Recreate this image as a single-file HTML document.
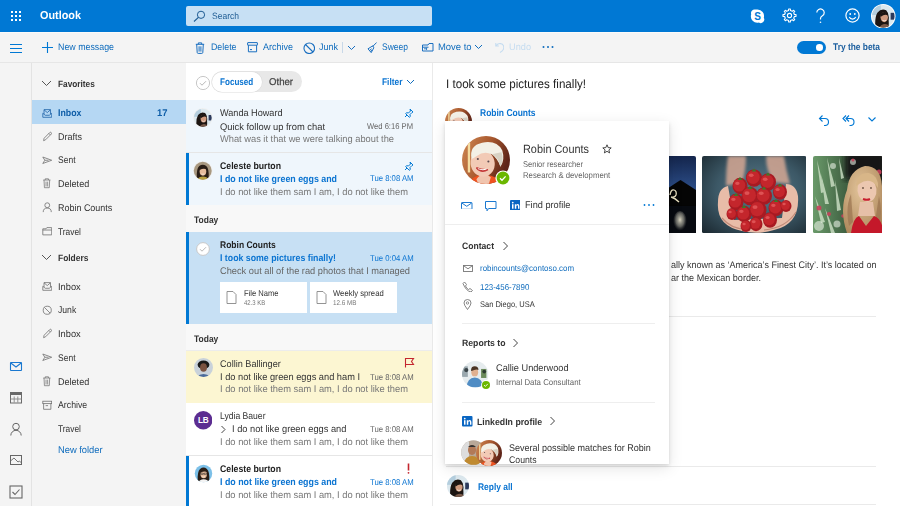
<!DOCTYPE html>
<html><head><meta charset="utf-8"><style>
html,body{margin:0;padding:0;width:900px;height:506px;overflow:hidden;background:#fff;}
body{position:relative;font-family:"Liberation Sans",sans-serif;}
body>div,body>svg,body>span{position:absolute;}
.t{white-space:nowrap;line-height:1;transform-origin:0 0;text-rendering:geometricPrecision;}
</style></head><body>
<div style="left:0px;top:31px;width:900px;height:31px;background:#f4f4f4;"></div>
<div style="left:0px;top:31.5px;width:900px;height:1.5px;background:#fafafa;"></div>
<div style="left:0px;top:0px;width:900px;height:31.5px;background:#0078d4;"></div>
<div style="left:0px;top:62px;width:900px;height:1px;background:#e6e6e6;"></div>
<div style="left:0px;top:63px;width:31px;height:443px;background:#f4f4f4;"></div>
<div style="left:31px;top:63px;width:1px;height:443px;background:#e3e3e3;"></div>
<div style="left:32px;top:63px;width:154px;height:443px;background:#f4f4f4;"></div>
<div style="left:186px;top:63px;width:246px;height:443px;background:#ffffff;"></div>
<div style="left:432px;top:63px;width:468px;height:443px;background:#ffffff;"></div>
<div style="left:432px;top:63px;width:1px;height:443px;background:#eaeaea;"></div>
<svg style="left:0px;top:0px;" width="31" height="31" viewBox="0 0 31 31"><rect x="11" y="11" width="2" height="2" fill="#fff"/><rect x="11" y="15" width="2" height="2" fill="#fff"/><rect x="11" y="19" width="2" height="2" fill="#fff"/><rect x="15" y="11" width="2" height="2" fill="#fff"/><rect x="15" y="15" width="2" height="2" fill="#fff"/><rect x="15" y="19" width="2" height="2" fill="#fff"/><rect x="19" y="11" width="2" height="2" fill="#fff"/><rect x="19" y="15" width="2" height="2" fill="#fff"/><rect x="19" y="19" width="2" height="2" fill="#fff"/></svg>
<span class="t" style="left:39.50px;top:11.18px;font-size:11.54px;font-weight:700;color:#ffffff;transform:scaleX(0.9412);">Outlook</span>
<div style="left:186px;top:5.5px;width:246px;height:20.8px;background:#c7e0f4;border-radius:2px;"></div>
<svg style="left:193px;top:10px;" width="13" height="12" viewBox="0 0 13 12"><circle cx="8" cy="4.8" r="3.6" fill="none" stroke="#1c5a92" stroke-width="1"/><line x1="5.4" y1="7.4" x2="1" y2="11.5" stroke="#1c5a92" stroke-width="1.1"/></svg>
<span class="t" style="left:212.00px;top:12.24px;font-size:9.27px;font-weight:400;color:#1c5a92;transform:scaleX(0.9196);">Search</span>
<svg style="left:749px;top:8px;" width="17" height="16" viewBox="0 0 17 16"><path d="M8.5 1.5a6.5 6.5 0 0 1 6.3 8.2a3.6 3.6 0 0 1-4.9 4.9A6.5 6.5 0 0 1 2.2 6.3A3.6 3.6 0 0 1 6.3 1.6A6.5 6.5 0 0 1 8.5 1.5z" fill="#fff"/><text x="8.5" y="12" font-family="Liberation Sans" font-weight="700" font-size="10" fill="#0078d4" text-anchor="middle">S</text></svg>
<svg style="left:782px;top:8.3px;" width="15" height="15" viewBox="0 0 15 15"><circle cx="7.5" cy="7.5" r="2.1" fill="none" stroke="#fff" stroke-width="1.1"/><path d="M12.40 6.51 L14.04 6.64 L14.04 8.36 L12.40 8.49 L11.67 10.26 L12.73 11.52 L11.52 12.73 L10.26 11.67 L8.49 12.40 L8.36 14.04 L6.64 14.04 L6.51 12.40 L4.74 11.67 L3.48 12.73 L2.27 11.52 L3.33 10.26 L2.60 8.49 L0.96 8.36 L0.96 6.64 L2.60 6.51 L3.33 4.74 L2.27 3.48 L3.48 2.27 L4.74 3.33 L6.51 2.60 L6.64 0.96 L8.36 0.96 L8.49 2.60 L10.26 3.33 L11.52 2.27 L12.73 3.48 L11.67 4.74z" fill="none" stroke="#fff" stroke-width="1.1" stroke-linejoin="round"/></svg>
<svg style="left:814px;top:8px;" width="13" height="16" viewBox="0 0 13 16"><path d="M2.8 4.6a3.7 3.7 0 1 1 5.6 3.2c-1.2.7-1.9 1.4-1.9 2.8v1" fill="none" stroke="#fff" stroke-width="1.2"/><circle cx="6.5" cy="14.3" r=".8" fill="#fff"/></svg>
<svg style="left:845px;top:8px;" width="15" height="15" viewBox="0 0 15 15"><circle cx="7.5" cy="7.5" r="6.6" fill="none" stroke="#fff" stroke-width="1.2"/><circle cx="5.2" cy="6" r=".9" fill="#fff"/><circle cx="9.8" cy="6" r=".9" fill="#fff"/><path d="M4.3 9a3.5 3.5 0 0 0 6.4 0" fill="none" stroke="#fff" stroke-width="1.1"/></svg>
<svg style="left:871px;top:3.5px;" width="24.5" height="24.5" viewBox="0 0 100 100"><defs><clipPath id="ca1"><circle cx="50" cy="50" r="46"/></clipPath></defs><circle cx="50" cy="50" r="50" fill="#fff"/><g clip-path="url(#ca1)"><rect width="100" height="100" fill="#dce8ee"/><rect x="0" y="0" width="40" height="45" fill="#b4cede"/><rect x="80" y="36" width="20" height="28" fill="#2c3a5c"/><path d="M18 100 Q14 56 26 36 Q42 16 62 26 Q76 40 72 66 Q74 86 70 100z" fill="#1c1512"/><ellipse cx="54" cy="54" rx="15" ry="20" fill="#cf9a7e"/><path d="M38 46 Q44 28 64 34 Q70 40 70 48 Q58 38 40 52z" fill="#1c1512"/><path d="M46 66 Q54 72 62 66" fill="none" stroke="#f6ece6" stroke-width="3.5"/><path d="M30 100 Q42 82 56 82 Q72 82 82 100z" fill="#7a5a4a"/></g></svg>
<svg style="left:9px;top:42px;" width="14" height="12" viewBox="0 0 14 12"><path d="M1 2.5h12M1 6.5h12M1 10.5h12" stroke="#0078d4" stroke-width="1.1"/></svg>
<svg style="left:41px;top:41px;" width="13" height="13" viewBox="0 0 13 13"><path d="M6.5 1v11M1 6.5h11" stroke="#0078d4" stroke-width="1.1"/></svg>
<span class="t" style="left:58.20px;top:43.40px;font-size:9.58px;font-weight:400;color:#0f6cbd;transform:scaleX(0.9228);">New message</span>
<svg style="left:194.5px;top:41.5px;" width="10" height="12" viewBox="0 0 10 12"><path d="M0.8 2.3h8.4M3.3 2.3V0.9h3.4v1.4M1.7 2.3l.5 8.2q.1 .9 1 .9h3.6q.9 0 1-.9l.5-8.2M4.1 4.3v5.3M5.9 4.3v5.3" fill="none" stroke="#1a6fc0" stroke-width="1"/></svg>
<span class="t" style="left:210.60px;top:43.40px;font-size:9.58px;font-weight:400;color:#0f6cbd;transform:scaleX(0.9210);">Delete</span>
<svg style="left:246.8px;top:42px;" width="11" height="11" viewBox="0 0 11 11"><rect x="0.6" y="0.6" width="9.8" height="2.6" rx="0.3" fill="none" stroke="#1a6fc0" stroke-width="1"/><path d="M1.4 3.2v6.6h8.2V3.2M3 7.6h2" fill="none" stroke="#1a6fc0" stroke-width="1"/></svg>
<span class="t" style="left:262.80px;top:43.40px;font-size:9.58px;font-weight:400;color:#0f6cbd;transform:scaleX(0.9389);">Archive</span>
<svg style="left:302.5px;top:41.5px;" width="12.5" height="12.5" viewBox="0 0 12.5 12.5"><circle cx="6.25" cy="6.25" r="5.3" fill="none" stroke="#1a6fc0" stroke-width="1.1"/><path d="M2.5 2.5l7.5 7.5" stroke="#1a6fc0" stroke-width="1.1"/></svg>
<span class="t" style="left:319.00px;top:43.40px;font-size:9.58px;font-weight:400;color:#0f6cbd;transform:scaleX(0.9390);">Junk</span>
<div style="left:342px;top:42px;width:0.8px;height:11px;background:#c8d8e8;"></div>
<svg style="left:347px;top:45px;" width="9" height="5.5" viewBox="0 0 9 5.5"><path d="M1 1l3.5 3.5L8 1" fill="none" stroke="#1a6fc0" stroke-width="1"/></svg>
<svg style="left:367px;top:42px;" width="10" height="11" viewBox="0 0 10 11"><path d="M9.6 0.5L5.6 4.6M5.8 3.8L1 6.8l3.2 3.8 2.6-4.8z M2.6 8.4l2-1.6M3.6 9.6l1.6-1.6" fill="none" stroke="#1a6fc0" stroke-width="1" stroke-linejoin="round"/></svg>
<span class="t" style="left:381.60px;top:43.40px;font-size:9.58px;font-weight:400;color:#0f6cbd;transform:scaleX(0.8875);">Sweep</span>
<svg style="left:422px;top:43px;" width="11.5" height="8.5" viewBox="0 0 11.5 8.5"><path d="M0.5 2h5.5l1-1.5h4v7.5H0.5z M0.5 4.2h6" fill="none" stroke="#1a6fc0" stroke-width="1"/><path d="M2 5.8h3M4 4.8l1.1 1-1.1 1" fill="none" stroke="#1a6fc0" stroke-width="0.9"/></svg>
<span class="t" style="left:438.20px;top:43.40px;font-size:9.58px;font-weight:400;color:#0f6cbd;transform:scaleX(0.9860);">Move to</span>
<svg style="left:474px;top:44px;" width="9" height="6" viewBox="0 0 9 6"><path d="M1 1l3.5 3.5L8 1" fill="none" stroke="#0f6cbd" stroke-width="1"/></svg>
<svg style="left:494.5px;top:42px;" width="9.5" height="11" viewBox="0 0 9.5 11"><path d="M0.8 1v3h3M1 3.8Q3 1.3 5.5 1.6q3.3 .5 3.3 3.9q0 3-3.8 5" fill="none" stroke="#c5dcf0" stroke-width="1.1"/></svg>
<span class="t" style="left:509.30px;top:43.40px;font-size:9.58px;font-weight:400;color:#c5dcf0;transform:scaleX(0.9604);">Undo</span>
<svg style="left:542px;top:45px;" width="12" height="4" viewBox="0 0 12 4"><circle cx="1.5" cy="2" r="1" fill="#0f6cbd"/><circle cx="6" cy="2" r="1" fill="#0f6cbd"/><circle cx="10.5" cy="2" r="1" fill="#0f6cbd"/></svg>
<div style="left:797px;top:41px;width:29px;height:13px;background:#0078d4;border-radius:7px;"></div>
<div style="left:816.3px;top:44px;width:6.6px;height:6.6px;background:#fff;border-radius:50%;"></div>
<span class="t" style="left:833.30px;top:43.45px;font-size:9.68px;font-weight:700;color:#1b5e9e;transform:scaleX(0.8656);">Try the beta</span>
<svg style="left:9px;top:361px;" width="14" height="11" viewBox="0 0 14 11"><rect x="1.5" y="1.5" width="11" height="8" rx="0.5" fill="none" stroke="#1a78d0" stroke-width="1.1"/><path d="M1.8 2l5.2 4 5.2-4" fill="none" stroke="#1a78d0" stroke-width="1.1"/></svg>
<svg style="left:9px;top:391px;" width="14" height="13" viewBox="0 0 14 13"><rect x="1.5" y="1.5" width="11" height="10.5" fill="none" stroke="#6a6a6a" stroke-width="1"/><rect x="1.5" y="1.5" width="11" height="2.5" fill="#6a6a6a"/><path d="M5.2 5.5v6M8.8 5.5v6M1.5 8h11" fill="none" stroke="#888" stroke-width="0.9"/></svg>
<svg style="left:9px;top:422px;" width="14" height="14" viewBox="0 0 14 14"><circle cx="7" cy="4.6" r="3.3" fill="none" stroke="#666" stroke-width="1"/><path d="M1.8 13.5a5.2 5.2 0 0 1 10.4 0" fill="none" stroke="#666" stroke-width="1"/></svg>
<svg style="left:9px;top:454px;" width="14" height="12" viewBox="0 0 14 12"><rect x="1.5" y="1.5" width="11" height="9" fill="none" stroke="#666" stroke-width="1"/><path d="M1.5 7l3.5-3 4 4 1.5-1 2 2" fill="none" stroke="#666" stroke-width="0.9"/></svg>
<svg style="left:9px;top:485px;" width="14" height="14" viewBox="0 0 14 14"><rect x="1" y="1" width="12" height="12" fill="none" stroke="#666" stroke-width="1.1"/><path d="M3.5 7l2.5 2.5 4.5-5" fill="none" stroke="#666" stroke-width="1.1"/></svg>
<svg style="left:41px;top:80px;" width="11" height="7" viewBox="0 0 11 7"><path d="M1 1l4.5 4.5L10 1" fill="none" stroke="#555" stroke-width="1"/></svg>
<span class="t" style="left:57.60px;top:80.44px;font-size:9.27px;font-weight:700;color:#333333;transform:scaleX(0.8931);">Favorites</span>
<div style="left:32px;top:100px;width:154px;height:23.5px;background:#b5d7f3;"></div>
<svg style="left:41.5px;top:107.5px;" width="10.5" height="10.5" viewBox="0 0 13 13"><path d="M2.5 7.5V2h8v5.5M2.5 2.2l4 3.5 4-3.5" fill="none" stroke="#1f63a8" stroke-width="1"/><path d="M1 6.5v5h11v-5L9 9H4z" fill="none" stroke="#1f63a8" stroke-width="1" stroke-linejoin="round"/></svg>
<span class="t" style="left:57.60px;top:108.75px;font-size:9.68px;font-weight:700;color:#0f5ea8;transform:scaleX(0.9071);">Inbox</span>
<span class="t" style="left:156.50px;top:108.75px;font-size:9.68px;font-weight:700;color:#0f5ea8;transform:scaleX(0.9753);">17</span>
<svg style="left:41.5px;top:131.1px;" width="10.5" height="10.5" viewBox="0 0 13 13"><path d="M2 12l.6-3L9.5 2a1.3 1.3 0 0 1 1.9 1.9L4.5 10.8z M8.5 3l2 2" fill="none" stroke="#707070" stroke-width="1"/></svg>
<span class="t" style="left:57.60px;top:132.85px;font-size:9.68px;font-weight:400;color:#333333;transform:scaleX(0.9303);">Drafts</span>
<svg style="left:41.5px;top:154.7px;" width="10.5" height="10.5" viewBox="0 0 13 13"><path d="M1 2.5l11 4-11 4 2.5-4z M3.5 6.5H8" fill="none" stroke="#707070" stroke-width="1"/></svg>
<span class="t" style="left:57.60px;top:156.45px;font-size:9.68px;font-weight:400;color:#333333;transform:scaleX(0.8791);">Sent</span>
<svg style="left:41.5px;top:178.4px;" width="10.5" height="10.5" viewBox="0 0 13 13"><path d="M1.5 2.5h9M4 2.5V1h4v1.5M2.5 2.5l.5 9.5h6l.5-9.5M5 4.5v6M7 4.5v6" fill="none" stroke="#707070" stroke-width="0.9"/></svg>
<span class="t" style="left:57.60px;top:180.15px;font-size:9.68px;font-weight:400;color:#333333;transform:scaleX(0.9357);">Deleted</span>
<svg style="left:41.5px;top:202.3px;" width="10.5" height="10.5" viewBox="0 0 13 13"><circle cx="6.5" cy="4" r="3" fill="none" stroke="#707070" stroke-width="1"/><path d="M1.5 12.5a5 5 0 0 1 10 0" fill="none" stroke="#707070" stroke-width="1"/></svg>
<span class="t" style="left:57.60px;top:204.05px;font-size:9.68px;font-weight:400;color:#333333;transform:scaleX(0.9265);">Robin Counts</span>
<svg style="left:41.5px;top:225.9px;" width="10.5" height="10.5" viewBox="0 0 13 13"><path d="M1 3.5h4l1-1.5h6v9H1z M1 5h11" fill="none" stroke="#707070" stroke-width="1"/></svg>
<span class="t" style="left:57.60px;top:227.65px;font-size:9.68px;font-weight:400;color:#333333;transform:scaleX(0.8636);">Travel</span>
<svg style="left:41px;top:254px;" width="11" height="7" viewBox="0 0 11 7"><path d="M1 1l4.5 4.5L10 1" fill="none" stroke="#555" stroke-width="1"/></svg>
<span class="t" style="left:57.60px;top:254.24px;font-size:9.27px;font-weight:700;color:#333333;transform:scaleX(0.9083);">Folders</span>
<svg style="left:41.5px;top:281.3px;" width="10.5" height="10.5" viewBox="0 0 13 13"><path d="M2.5 7.5V2h8v5.5M2.5 2.2l4 3.5 4-3.5" fill="none" stroke="#707070" stroke-width="1"/><path d="M1 6.5v5h11v-5L9 9H4z" fill="none" stroke="#707070" stroke-width="1" stroke-linejoin="round"/></svg>
<span class="t" style="left:57.60px;top:283.05px;font-size:9.68px;font-weight:400;color:#333333;transform:scaleX(0.9589);">Inbox</span>
<svg style="left:41.5px;top:304.7px;" width="10.5" height="10.5" viewBox="0 0 13 13"><circle cx="6.5" cy="6.5" r="5" fill="none" stroke="#707070" stroke-width="1"/><path d="M3 3l7 7" stroke="#707070" stroke-width="1"/></svg>
<span class="t" style="left:57.60px;top:306.45px;font-size:9.68px;font-weight:400;color:#333333;transform:scaleX(0.8905);">Junk</span>
<svg style="left:41.5px;top:328.4px;" width="10.5" height="10.5" viewBox="0 0 13 13"><path d="M2 12l.6-3L9.5 2a1.3 1.3 0 0 1 1.9 1.9L4.5 10.8z M8.5 3l2 2" fill="none" stroke="#707070" stroke-width="1"/></svg>
<span class="t" style="left:57.60px;top:330.15px;font-size:9.68px;font-weight:400;color:#333333;transform:scaleX(0.9589);">Inbox</span>
<svg style="left:41.5px;top:352.3px;" width="10.5" height="10.5" viewBox="0 0 13 13"><path d="M1 2.5l11 4-11 4 2.5-4z M3.5 6.5H8" fill="none" stroke="#707070" stroke-width="1"/></svg>
<span class="t" style="left:57.60px;top:354.05px;font-size:9.68px;font-weight:400;color:#333333;transform:scaleX(0.8791);">Sent</span>
<svg style="left:41.5px;top:376.4px;" width="10.5" height="10.5" viewBox="0 0 13 13"><path d="M1.5 2.5h9M4 2.5V1h4v1.5M2.5 2.5l.5 9.5h6l.5-9.5M5 4.5v6M7 4.5v6" fill="none" stroke="#707070" stroke-width="0.9"/></svg>
<span class="t" style="left:57.60px;top:378.15px;font-size:9.68px;font-weight:400;color:#333333;transform:scaleX(0.9357);">Deleted</span>
<svg style="left:41.5px;top:399.7px;" width="10.5" height="10.5" viewBox="0 0 13 13"><rect x="1" y="1.5" width="11" height="3" fill="none" stroke="#707070" stroke-width="1"/><path d="M2 4.5v7h9v-7M4.5 7h3" fill="none" stroke="#707070" stroke-width="1"/></svg>
<span class="t" style="left:57.60px;top:401.45px;font-size:9.68px;font-weight:400;color:#333333;transform:scaleX(0.9050);">Archive</span>
<span class="t" style="left:57.60px;top:425.15px;font-size:9.68px;font-weight:400;color:#333333;transform:scaleX(0.8636);">Travel</span>
<span class="t" style="left:57.60px;top:446.45px;font-size:9.68px;font-weight:400;color:#0f6cbd;transform:scaleX(0.9647);">New folder</span>
<svg style="left:195px;top:75px;" width="16" height="16" viewBox="0 0 16 16"><circle cx="8" cy="8" r="6.6" fill="#fff" stroke="#c8c8c8" stroke-width="1"/><path d="M5 8.2l2 2 4-4" fill="none" stroke="#b8b8b8" stroke-width="1"/></svg>
<div style="left:212px;top:71.3px;width:90px;height:21px;background:#e8e8e8;border-radius:10.5px;"></div>
<div style="left:212.4px;top:71.6px;width:49.6px;height:20.4px;background:#ffffff;border-radius:10.2px;box-shadow:0 0 0 0.6px #dcdcdc;"></div>
<span class="t" style="left:220.40px;top:77.95px;font-size:9.68px;font-weight:700;color:#0b74d1;transform:scaleX(0.8371);">Focused</span>
<span class="t" style="left:268.90px;top:77.85px;font-size:9.89px;font-weight:400;color:#444444;transform:scaleX(0.9715);-webkit-text-stroke:0.25px #444;">Other</span>
<span class="t" style="left:381.50px;top:77.95px;font-size:9.68px;font-weight:700;color:#0b74d1;transform:scaleX(0.8666);">Filter</span>
<svg style="left:406px;top:79px;" width="9" height="6" viewBox="0 0 9 6"><path d="M1 1l3.5 3.5L8 1" fill="none" stroke="#0f6cbd" stroke-width="1"/></svg>
<div style="left:186px;top:99.5px;width:246px;height:0.6px;background:#eaeaea;"></div>
<div style="left:186px;top:100px;width:246px;height:52px;background:#eff6fc;"></div>
<div style="left:186px;top:152px;width:246px;height:0.7px;background:#e6e6e6;"></div>
<svg style="left:193px;top:107.5px;" width="19.5" height="19.5" viewBox="0 0 100 100"><defs><clipPath id="av1"><circle cx="50" cy="50" r="46"/></clipPath></defs><circle cx="50" cy="50" r="50" fill="#f0f0f0"/><g clip-path="url(#av1)"><rect width="100" height="100" fill="#dce8ee"/><rect x="0" y="0" width="40" height="45" fill="#b4cede"/><rect x="80" y="36" width="20" height="28" fill="#2c3a5c"/><path d="M18 100 Q14 56 26 36 Q42 16 62 26 Q76 40 72 66 Q74 86 70 100z" fill="#1c1512"/><ellipse cx="54" cy="54" rx="15" ry="20" fill="#cf9a7e"/><path d="M38 46 Q44 28 64 34 Q70 40 70 48 Q58 38 40 52z" fill="#1c1512"/><path d="M46 66 Q54 72 62 66" fill="none" stroke="#f6ece6" stroke-width="3.5"/><path d="M30 100 Q42 82 56 82 Q72 82 82 100z" fill="#7a5a4a"/></g></svg>
<span class="t" style="left:220.00px;top:108.95px;font-size:9.68px;font-weight:400;color:#333;transform:scaleX(0.9425);">Wanda Howard</span>
<svg style="left:404px;top:108px;" width="10" height="10" viewBox="0 0 10 10"><path d="M6 1l3 3-1 .5-2 2 .3 2-1 .8L1.7 5.7l.8-1 2 .3 2-2z M3 7L1 9" fill="none" stroke="#0078d4" stroke-width="1"/></svg>
<span class="t" style="left:220.00px;top:122.65px;font-size:9.68px;font-weight:400;color:#333;transform:scaleX(0.9669);">Quick follow up from chat</span>
<span class="t" style="left:367.00px;top:122.33px;font-size:8.45px;font-weight:400;color:#666;transform:scaleX(0.9025);">Wed 6:16 PM</span>
<span class="t" style="left:220.00px;top:135.45px;font-size:9.68px;font-weight:400;color:#777;transform:scaleX(0.9603);">What was it that we were talking about the</span>
<div style="left:186px;top:152.7px;width:246px;height:52.3px;background:#eff6fc;"></div>
<div style="left:186px;top:152.7px;width:3px;height:52.3px;background:#0078d4;"></div>
<svg style="left:193px;top:160.5px;" width="19.5" height="19.5" viewBox="0 0 100 100"><defs><clipPath id="av2"><circle cx="50" cy="50" r="46"/></clipPath></defs><circle cx="50" cy="50" r="50" fill="#f0f0f0"/><g clip-path="url(#av2)"><rect width="100" height="100" fill="#a89880"/><path d="M20 90 Q16 40 32 26 Q50 12 68 26 Q84 40 80 90z" fill="#2a1e16"/><ellipse cx="51" cy="54" rx="17" ry="21" fill="#e6bc9c"/><path d="M32 42 Q40 22 58 26 Q70 30 70 44 Q56 34 34 46z" fill="#2a1e16"/><path d="M44 66 Q51 71 58 66" fill="none" stroke="#fff" stroke-width="3"/><path d="M18 100 Q30 80 51 80 Q72 80 84 100z" fill="#b8a040"/></g></svg>
<span class="t" style="left:220.00px;top:161.55px;font-size:9.68px;font-weight:700;color:#222;transform:scaleX(0.9008);">Celeste burton</span>
<svg style="left:404px;top:161px;" width="10" height="10" viewBox="0 0 10 10"><path d="M6 1l3 3-1 .5-2 2 .3 2-1 .8L1.7 5.7l.8-1 2 .3 2-2z M3 7L1 9" fill="none" stroke="#0078d4" stroke-width="1"/></svg>
<span class="t" style="left:220.00px;top:174.55px;font-size:9.68px;font-weight:700;color:#0b74d1;transform:scaleX(0.9147);">I do not like green eggs and</span>
<span class="t" style="left:369.80px;top:174.43px;font-size:8.45px;font-weight:400;color:#0b74d1;transform:scaleX(0.9152);">Tue 8:08 AM</span>
<span class="t" style="left:220.00px;top:187.95px;font-size:9.68px;font-weight:400;color:#777;transform:scaleX(0.9634);">I do not like them sam I am, I do not like them</span>
<div style="left:186px;top:205px;width:246px;height:27px;background:#f8f8f8;"></div>
<span class="t" style="left:194.30px;top:216.25px;font-size:9.48px;font-weight:700;color:#333;transform:scaleX(0.8938);">Today</span>
<div style="left:186px;top:232px;width:246px;height:91.5px;background:#c7e0f4;"></div>
<div style="left:186px;top:232px;width:3px;height:91.5px;background:#0078d4;"></div>
<svg style="left:195px;top:241px;" width="16" height="16" viewBox="0 0 16 16"><circle cx="8" cy="8" r="6.4" fill="#fff" stroke="#c8c8c8" stroke-width="1"/><path d="M5 8.2l2 2 4-4" fill="none" stroke="#b8b8b8" stroke-width="1"/></svg>
<span class="t" style="left:220.40px;top:240.85px;font-size:9.68px;font-weight:700;color:#222;transform:scaleX(0.8785);">Robin Counts</span>
<span class="t" style="left:220.00px;top:254.05px;font-size:9.68px;font-weight:700;color:#0b74d1;transform:scaleX(0.9068);">I took some pictures finally!</span>
<span class="t" style="left:369.70px;top:253.93px;font-size:8.45px;font-weight:400;color:#0b74d1;transform:scaleX(0.9173);">Tue 0:04 AM</span>
<span class="t" style="left:220.00px;top:267.05px;font-size:9.68px;font-weight:400;color:#666;transform:scaleX(0.9576);">Check out all of the rad photos that I managed</span>
<div style="left:220px;top:282px;width:87px;height:31px;background:#ffffff;"></div>
<svg style="left:226px;top:291px;" width="11" height="13" viewBox="0 0 11 13"><path d="M1 .5h6l3 3v9H1z" fill="none" stroke="#888" stroke-width="0.9"/></svg>
<span class="t" style="left:243.80px;top:289.13px;font-size:8.45px;font-weight:400;color:#333;transform:scaleX(0.8998);">File Name</span>
<span class="t" style="left:243.80px;top:300.31px;font-size:7.00px;font-weight:400;color:#777;transform:scaleX(0.8547);">42.3 KB</span>
<div style="left:309.5px;top:282px;width:87px;height:31px;background:#ffffff;"></div>
<svg style="left:315.5px;top:291px;" width="11" height="13" viewBox="0 0 11 13"><path d="M1 .5h6l3 3v9H1z" fill="none" stroke="#888" stroke-width="0.9"/></svg>
<span class="t" style="left:333.30px;top:289.13px;font-size:8.45px;font-weight:400;color:#333;transform:scaleX(0.9109);">Weekly spread</span>
<span class="t" style="left:333.30px;top:300.31px;font-size:7.00px;font-weight:400;color:#777;transform:scaleX(0.8973);">12.6 MB</span>
<div style="left:186px;top:323.5px;width:246px;height:26.5px;background:#f8f8f8;"></div>
<span class="t" style="left:194.30px;top:334.55px;font-size:9.48px;font-weight:700;color:#333;transform:scaleX(0.8938);">Today</span>
<div style="left:186px;top:349.5px;width:246px;height:1px;background:#ececec;"></div>
<div style="left:186px;top:350.5px;width:246px;height:52px;background:#fcf6d2;"></div>
<svg style="left:193.5px;top:358.3px;" width="19" height="19" viewBox="0 0 19 19"><defs><clipPath id="av3"><circle cx="9.5" cy="9.5" r="9.5"/></clipPath></defs><g clip-path="url(#av3)"><rect width="19" height="19" fill="#c9d2da"/><ellipse cx="9.5" cy="6.6499999999999995" rx="5.89" ry="4.275" fill="#1a1a1a"/><ellipse cx="9.5" cy="9.5" rx="3.42" ry="4.37" fill="#7a5240"/><path d="M2.375 19 Q9.5 12.825000000000001 16.625 19z" fill="#4a6a9a"/></g></svg>
<span class="t" style="left:220.00px;top:359.55px;font-size:9.68px;font-weight:400;color:#333;transform:scaleX(0.9424);">Collin Ballinger</span>
<svg style="left:404px;top:357px;" width="11" height="11" viewBox="0 0 11 11"><path d="M1.5 10.5V1M1.5 1.5h8l-2 3 2 3h-8" fill="none" stroke="#c4262e" stroke-width="1.1"/></svg>
<span class="t" style="left:220.00px;top:372.65px;font-size:9.68px;font-weight:400;color:#333;transform:scaleX(0.9573);">I do not like green eggs and ham I</span>
<span class="t" style="left:370.00px;top:372.53px;font-size:8.45px;font-weight:400;color:#666;transform:scaleX(0.9173);">Tue 8:08 AM</span>
<span class="t" style="left:220.00px;top:385.15px;font-size:9.68px;font-weight:400;color:#777;transform:scaleX(0.9634);">I do not like them sam I am, I do not like them</span>
<div style="left:186px;top:402.5px;width:246px;height:53px;background:#ffffff;"></div>
<div style="left:186px;top:455.3px;width:246px;height:0.7px;background:#e6e6e6;"></div>
<svg style="left:193.8px;top:411px;" width="18.5" height="18.5" viewBox="0 0 18.5 18.5"><circle cx="9.25" cy="9.25" r="9.25" fill="#5c2d91"/><text x="9.25" y="12.4" font-family="Liberation Sans" font-size="8.2" font-weight="700" fill="#fff" text-anchor="middle" letter-spacing="-0.3">LB</text></svg>
<span class="t" style="left:220.20px;top:412.35px;font-size:9.68px;font-weight:400;color:#333;transform:scaleX(0.8875);">Lydia Bauer</span>
<svg style="left:219.5px;top:425px;" width="7" height="9" viewBox="0 0 7 9"><path d="M1.5 1l3.5 3.5L1.5 8" fill="none" stroke="#444" stroke-width="1"/></svg>
<span class="t" style="left:232.00px;top:425.45px;font-size:9.68px;font-weight:400;color:#333;transform:scaleX(0.9583);">I do not like green eggs and</span>
<span class="t" style="left:370.00px;top:425.33px;font-size:8.45px;font-weight:400;color:#666;transform:scaleX(0.9173);">Tue 8:08 AM</span>
<span class="t" style="left:220.00px;top:438.45px;font-size:9.68px;font-weight:400;color:#777;transform:scaleX(0.9634);">I do not like them sam I am, I do not like them</span>
<div style="left:186px;top:456px;width:246px;height:50px;background:#ffffff;"></div>
<div style="left:186px;top:456px;width:3px;height:50px;background:#0078d4;"></div>
<svg style="left:193.5px;top:463.5px;" width="19" height="19" viewBox="0 0 100 100"><defs><clipPath id="av4"><circle cx="50" cy="50" r="46"/></clipPath></defs><circle cx="50" cy="50" r="50" fill="#fff"/><g clip-path="url(#av4)"><rect width="100" height="100" fill="#7cc0e8"/><path d="M20 90 Q16 40 32 26 Q50 12 68 26 Q84 40 80 90z" fill="#2a1e16"/><ellipse cx="51" cy="54" rx="17" ry="21" fill="#e6bc9c"/><path d="M32 42 Q40 22 58 26 Q70 30 70 44 Q56 34 34 46z" fill="#2a1e16"/><path d="M36 48 h12 v7 h-12z M54 48 h12 v7 h-12z M48 51 h6" fill="none" stroke="#222" stroke-width="2.5"/><path d="M44 66 Q51 71 58 66" fill="none" stroke="#fff" stroke-width="3"/><path d="M18 100 Q30 80 51 80 Q72 80 84 100z" fill="#f4f4f4"/></g></svg>
<span class="t" style="left:220.00px;top:464.85px;font-size:9.68px;font-weight:700;color:#222;transform:scaleX(0.9008);">Celeste burton</span>
<svg style="left:406px;top:463px;" width="5" height="11" viewBox="0 0 5 11"><path d="M2.5 0.5v7" stroke="#c4262e" stroke-width="1.6"/><circle cx="2.5" cy="9.8" r="0.9" fill="#c4262e"/></svg>
<span class="t" style="left:220.00px;top:478.25px;font-size:9.68px;font-weight:700;color:#0b74d1;transform:scaleX(0.9147);">I do not like green eggs and</span>
<span class="t" style="left:370.00px;top:478.13px;font-size:8.45px;font-weight:400;color:#0b74d1;transform:scaleX(0.9173);">Tue 8:08 AM</span>
<span class="t" style="left:220.00px;top:491.15px;font-size:9.68px;font-weight:400;color:#777;transform:scaleX(0.9634);">I do not like them sam I am, I do not like them</span>
<span class="t" style="left:446.40px;top:78.19px;font-size:12.36px;font-weight:400;color:#222;transform:scaleX(0.9392);">I took some pictures finally!</span>
<svg style="left:445px;top:107.6px;" width="27" height="27" viewBox="0 0 100 100"><defs><clipPath id="rav1"><circle cx="50" cy="50" r="50"/></clipPath><linearGradient id="rav1g" x1="0" y1="0" x2="1" y2="0.4"><stop offset="0" stop-color="#d08a56"/><stop offset="0.55" stop-color="#a8582e"/><stop offset="1" stop-color="#5e2418"/></linearGradient></defs><g clip-path="url(#rav1)"><rect width="100" height="100" fill="url(#rav1g)"/><rect x="12" y="14" width="5" height="62" fill="#f4dca0"/><path d="M14 100 Q22 80 46 82 Q70 80 86 100z" fill="#ee5220"/><path d="M30 90 Q44 72 60 86 L56 100 L34 100z" fill="#f0c4ae"/><ellipse cx="43" cy="57" rx="25" ry="28" transform="rotate(-15 43 57)" fill="#f2cab6"/><path d="M20 48 Q14 20 42 14 Q72 8 84 30 Q90 50 80 64 Q74 46 62 38 Q46 30 30 42 Q24 46 20 48z" fill="#f3f0e6"/><path d="M62 38 Q76 44 80 64 Q88 48 82 34z" fill="#d8d2c4"/><path d="M30 66 Q40 78 54 70 Q42 72 30 66z" fill="#c43a3a" stroke="#c43a3a" stroke-width="3"/><path d="M33 68 Q42 72 51 69" fill="none" stroke="#fff" stroke-width="2.2"/><circle cx="33" cy="48" r="2.2" fill="#5a4a50"/><circle cx="55" cy="53" r="2.2" fill="#5a4a50"/></g></svg>
<span class="t" style="left:480.00px;top:109.15px;font-size:9.89px;font-weight:700;color:#0b74d1;transform:scaleX(0.8589);">Robin Counts</span>
<svg style="left:818px;top:114px;" width="13" height="12" viewBox="0 0 13 12"><path d="M4.5 1.5L1.5 4.5l3 3M1.8 4.5h5.2a3.5 3.5 0 0 1 0 7H6" fill="none" stroke="#0078d4" stroke-width="1.1"/></svg>
<svg style="left:842px;top:114px;" width="14" height="12" viewBox="0 0 14 12"><path d="M4 1.5L1 4.5l3 3M7 1.5L4 4.5l3 3M4.3 4.5h4.2a3.5 3.5 0 0 1 0 7H7.5" fill="none" stroke="#0078d4" stroke-width="1.1"/></svg>
<svg style="left:867px;top:116px;" width="10" height="7" viewBox="0 0 10 7"><path d="M1.5 1.5l3.5 3.5 3.5-3.5" fill="none" stroke="#0078d4" stroke-width="1.1"/></svg>
<svg style="left:590px;top:155.5px;" width="106" height="77.3" viewBox="0 0 106 77.3"><defs><linearGradient id="sky" x1="0" y1="0" x2="0" y2="1"><stop offset="0" stop-color="#14254c"/><stop offset="0.45" stop-color="#2d4f8a"/><stop offset="0.6" stop-color="#3a5f98"/></linearGradient><radialGradient id="refl" cx="0.5" cy="0.4" r="0.5"><stop offset="0" stop-color="#d8d4c0"/><stop offset="0.6" stop-color="#9a9a90" stop-opacity="0.6"/><stop offset="1" stop-color="#555" stop-opacity="0"/></radialGradient></defs><rect width="106" height="77.3" rx="2" fill="url(#sky)"/><path d="M60 44 L90.5 24 L106 34 L106 52 L60 52z" fill="#050505"/><rect x="0" y="50" width="106" height="27.3" fill="#070a10"/><ellipse cx="90" cy="66" rx="7" ry="11" fill="url(#refl)"/><path d="M80 39 q1 -6 4 -5 q3 1 2 5 q-1 3 -5 2 q4 1 8 5" fill="none" stroke="#e8e0c0" stroke-width="1.3"/></svg>
<svg style="left:702px;top:155.5px;" width="104.4" height="77.3" viewBox="0 0 104.4 77.3"><defs><radialGradient id="sbg" cx="0.55" cy="0.45" r="0.75"><stop offset="0" stop-color="#5a7c8c"/><stop offset="0.55" stop-color="#3c5866"/><stop offset="1" stop-color="#1c2a32"/></radialGradient><filter id="sb"><feGaussianBlur stdDeviation="1.5"/></filter></defs><rect width="104.4" height="77.3" rx="2" fill="url(#sbg)"/><path d="M26 0 L44 0 Q44 16 40 26 L24 30 Q24 12 26 0z M64 0 L82 0 Q84 14 88 28 L72 26 Q64 16 64 0z" fill="#d6a894" opacity="0.85" filter="url(#sb)"/><path d="M16 46 Q14 70 40 75 Q56 79 72 74 Q98 68 96 40 Q94 28 84 28 L80 62 L32 64 L26 30 Q16 32 16 46z" fill="#e8bca8"/><path d="M20 62 Q30 74 46 73 M62 74 Q84 72 94 56" fill="none" stroke="#c08a78" stroke-width="1.2"/><ellipse cx="38" cy="30" rx="7.5" ry="8.25" fill="#a81a22"/><ellipse cx="37.25" cy="29.25" rx="6.0" ry="6.375" fill="#c4262c"/><ellipse cx="35.375" cy="27.375" rx="2.25" ry="1.65" fill="#f07070" opacity="0.6"/><ellipse cx="52" cy="22" rx="8" ry="8.8" fill="#a81a22"/><ellipse cx="51.2" cy="21.2" rx="6.4" ry="6.8" fill="#c4262c"/><ellipse cx="49.2" cy="19.2" rx="2.4" ry="1.76" fill="#f07070" opacity="0.6"/><ellipse cx="66" cy="26" rx="8" ry="8.8" fill="#a81a22"/><ellipse cx="65.2" cy="25.2" rx="6.4" ry="6.8" fill="#c4262c"/><ellipse cx="63.2" cy="23.2" rx="2.4" ry="1.76" fill="#f07070" opacity="0.6"/><ellipse cx="78" cy="36" rx="7" ry="7.700000000000001" fill="#a81a22"/><ellipse cx="77.3" cy="35.3" rx="5.6000000000000005" ry="5.95" fill="#c4262c"/><ellipse cx="75.55" cy="33.55" rx="2.1" ry="1.54" fill="#f07070" opacity="0.6"/><ellipse cx="34" cy="46" rx="7.5" ry="8.25" fill="#a81a22"/><ellipse cx="33.25" cy="45.25" rx="6.0" ry="6.375" fill="#c4262c"/><ellipse cx="31.375" cy="43.375" rx="2.25" ry="1.65" fill="#f07070" opacity="0.6"/><ellipse cx="48" cy="40" rx="8.5" ry="9.350000000000001" fill="#a81a22"/><ellipse cx="47.15" cy="39.15" rx="6.800000000000001" ry="7.225" fill="#c4262c"/><ellipse cx="45.025" cy="37.025" rx="2.55" ry="1.87" fill="#f07070" opacity="0.6"/><ellipse cx="62" cy="40" rx="8" ry="8.8" fill="#a81a22"/><ellipse cx="61.2" cy="39.2" rx="6.4" ry="6.8" fill="#c4262c"/><ellipse cx="59.2" cy="37.2" rx="2.4" ry="1.76" fill="#f07070" opacity="0.6"/><ellipse cx="74" cy="52" rx="7.5" ry="8.25" fill="#a81a22"/><ellipse cx="73.25" cy="51.25" rx="6.0" ry="6.375" fill="#c4262c"/><ellipse cx="71.375" cy="49.375" rx="2.25" ry="1.65" fill="#f07070" opacity="0.6"/><ellipse cx="42" cy="58" rx="7.5" ry="8.25" fill="#a81a22"/><ellipse cx="41.25" cy="57.25" rx="6.0" ry="6.375" fill="#c4262c"/><ellipse cx="39.375" cy="55.375" rx="2.25" ry="1.65" fill="#f07070" opacity="0.6"/><ellipse cx="56" cy="54" rx="8.5" ry="9.350000000000001" fill="#a81a22"/><ellipse cx="55.15" cy="53.15" rx="6.800000000000001" ry="7.225" fill="#c4262c"/><ellipse cx="53.025" cy="51.025" rx="2.55" ry="1.87" fill="#f07070" opacity="0.6"/><ellipse cx="68" cy="64" rx="7" ry="7.700000000000001" fill="#a81a22"/><ellipse cx="67.3" cy="63.3" rx="5.6000000000000005" ry="5.95" fill="#c4262c"/><ellipse cx="65.55" cy="61.55" rx="2.1" ry="1.54" fill="#f07070" opacity="0.6"/><ellipse cx="54" cy="68" rx="6.5" ry="7.15" fill="#a81a22"/><ellipse cx="53.35" cy="67.35" rx="5.2" ry="5.5249999999999995" fill="#c4262c"/><ellipse cx="51.725" cy="65.725" rx="1.95" ry="1.43" fill="#f07070" opacity="0.6"/><ellipse cx="84" cy="50" rx="5.5" ry="6.050000000000001" fill="#a81a22"/><ellipse cx="83.45" cy="49.45" rx="4.4" ry="4.675" fill="#c4262c"/><ellipse cx="82.075" cy="48.075" rx="1.65" ry="1.21" fill="#f07070" opacity="0.6"/><ellipse cx="30" cy="58" rx="5.5" ry="6.050000000000001" fill="#a81a22"/><ellipse cx="29.45" cy="57.45" rx="4.4" ry="4.675" fill="#c4262c"/><ellipse cx="28.075" cy="56.075" rx="1.65" ry="1.21" fill="#f07070" opacity="0.6"/><ellipse cx="44" cy="70" rx="5.5" ry="6.050000000000001" fill="#a81a22"/><ellipse cx="43.45" cy="69.45" rx="4.4" ry="4.675" fill="#c4262c"/><ellipse cx="42.075" cy="68.075" rx="1.65" ry="1.21" fill="#f07070" opacity="0.6"/><path d="M35.5 24.0 l2.5 -3 l2.5 3z" fill="#3d7a2a"/><path d="M49.5 15.5 l2.5 -3 l2.5 3z" fill="#3d7a2a"/><path d="M63.5 19.5 l2.5 -3 l2.5 3z" fill="#3d7a2a"/><path d="M75.5 30.5 l2.5 -3 l2.5 3z" fill="#3d7a2a"/><path d="M31.5 40.0 l2.5 -3 l2.5 3z" fill="#3d7a2a"/><path d="M45.5 33.0 l2.5 -3 l2.5 3z" fill="#3d7a2a"/><path d="M59.5 33.5 l2.5 -3 l2.5 3z" fill="#3d7a2a"/><path d="M71.5 46.0 l2.5 -3 l2.5 3z" fill="#3d7a2a"/><path d="M39.5 52.0 l2.5 -3 l2.5 3z" fill="#3d7a2a"/></svg>
<svg style="left:812.8px;top:155.5px;" width="69.2" height="77.3" viewBox="0 0 69.2 77.3"><defs><linearGradient id="fol" x1="0" y1="0" x2="1" y2="0"><stop offset="0" stop-color="#6a9a6a"/><stop offset="0.5" stop-color="#3e5e40"/><stop offset="1" stop-color="#1e261c"/></linearGradient><radialGradient id="hairg" cx="0.45" cy="0.35" r="0.7"><stop offset="0" stop-color="#e2c49a"/><stop offset="1" stop-color="#b08a5e"/></radialGradient></defs><rect width="69.2" height="77.3" rx="2" fill="url(#fol)"/><filter id="bl"><feGaussianBlur stdDeviation="3"/></filter><rect x="32" y="-4" width="40" height="28" fill="#141812" filter="url(#bl)"/><g fill="#cfe2c8" opacity="0.8"><path d="M4 4 L12 36 L8 37z"/><path d="M14 2 L22 30 L18 31z"/><path d="M2 40 L12 66 L8 67z"/><path d="M22 24 L28 54 L24 55z"/><path d="M8 18 L16 48 L12 48z"/><path d="M26 2 L31 22 L28 23z"/><path d="M12 52 L22 77 L18 77z"/></g><g fill="#e8f0e4" opacity="0.6"><circle cx="6" cy="70" r="5"/><circle cx="24" cy="68" r="3.5"/><circle cx="20" cy="10" r="3"/><circle cx="40" cy="6" r="3"/></g><g fill="#c8405a" opacity="0.9"><circle cx="6" cy="52" r="2.5"/><circle cx="16" cy="58" r="2"/><circle cx="66" cy="16" r="2.5"/><circle cx="30" cy="60" r="1.8"/><circle cx="40" cy="4" r="1.5"/></g><path d="M34 77 Q26 54 34 34 Q36 14 52 10 Q68 10 69 30 L69 77z" fill="url(#hairg)"/><path d="M36 70 Q32 52 38 38 L40 66z M66 72 Q70 56 66 40 L62 66z" fill="#9a7450" opacity="0.7"/><ellipse cx="54" cy="34" rx="9.5" ry="12" transform="rotate(-6 54 34)" fill="#ecc7b0"/><path d="M43 30 Q44 16 56 17 Q66 20 65 32 Q58 20 46 28z" fill="#d8b688"/><path d="M50 43 q4 1.6 7 0" stroke="#c81e2e" stroke-width="2" fill="none"/><circle cx="50" cy="32" r="0.9" fill="#6a5040"/><circle cx="58" cy="32" r="0.9" fill="#6a5040"/><path d="M47 46 L60 46 L62 60 L45 60z" fill="#e6c0a8"/><path d="M38 77 Q40 62 46 60 L53 70 L61 60 Q67 62 69.2 70 L69.2 77z" fill="#c4182a"/></svg>
<span class="t" style="left:671.00px;top:260.50px;font-size:9.58px;font-weight:400;color:#333;transform:scaleX(0.9403);">ally known as ‘America’s Finest City’. It’s located on</span>
<span class="t" style="left:671.00px;top:273.60px;font-size:9.58px;font-weight:400;color:#333;transform:scaleX(0.9443);">ar the Mexican border.</span>
<div style="left:446px;top:315.7px;width:430px;height:0.8px;background:#eaeaea;"></div>
<div style="left:446px;top:465.5px;width:430px;height:0.8px;background:#eaeaea;"></div>
<div style="left:450px;top:504.2px;width:426px;height:0.8px;background:#eaeaea;"></div>
<svg style="left:446px;top:474px;" width="24" height="24" viewBox="0 0 100 100"><defs><clipPath id="av5"><circle cx="50" cy="50" r="46"/></clipPath></defs><circle cx="50" cy="50" r="50" fill="#ffffff"/><g clip-path="url(#av5)"><rect width="100" height="100" fill="#dce8ee"/><rect x="0" y="0" width="40" height="45" fill="#b4cede"/><rect x="80" y="36" width="20" height="28" fill="#2c3a5c"/><path d="M18 100 Q14 56 26 36 Q42 16 62 26 Q76 40 72 66 Q74 86 70 100z" fill="#1c1512"/><ellipse cx="54" cy="54" rx="15" ry="20" fill="#cf9a7e"/><path d="M38 46 Q44 28 64 34 Q70 40 70 48 Q58 38 40 52z" fill="#1c1512"/><path d="M46 66 Q54 72 62 66" fill="none" stroke="#f6ece6" stroke-width="3.5"/><path d="M30 100 Q42 82 56 82 Q72 82 82 100z" fill="#7a5a4a"/></g></svg>
<span class="t" style="left:477.90px;top:483.35px;font-size:9.68px;font-weight:700;color:#0b74d1;transform:scaleX(0.8698);">Reply all</span>
<div style="left:445px;top:121px;width:224px;height:343px;background:#ffffff;box-shadow:0 1.6px 3.6px rgba(0,0,0,0.13),0 4px 14px rgba(0,0,0,0.11);"></div>
<svg style="left:462px;top:136px;" width="48" height="48" viewBox="0 0 100 100"><defs><clipPath id="rav2"><circle cx="50" cy="50" r="50"/></clipPath><linearGradient id="rav2g" x1="0" y1="0" x2="1" y2="0.4"><stop offset="0" stop-color="#d08a56"/><stop offset="0.55" stop-color="#a8582e"/><stop offset="1" stop-color="#5e2418"/></linearGradient></defs><g clip-path="url(#rav2)"><rect width="100" height="100" fill="url(#rav2g)"/><rect x="12" y="14" width="5" height="62" fill="#f4dca0"/><path d="M14 100 Q22 80 46 82 Q70 80 86 100z" fill="#ee5220"/><path d="M30 90 Q44 72 60 86 L56 100 L34 100z" fill="#f0c4ae"/><ellipse cx="43" cy="57" rx="25" ry="28" transform="rotate(-15 43 57)" fill="#f2cab6"/><path d="M20 48 Q14 20 42 14 Q72 8 84 30 Q90 50 80 64 Q74 46 62 38 Q46 30 30 42 Q24 46 20 48z" fill="#f3f0e6"/><path d="M62 38 Q76 44 80 64 Q88 48 82 34z" fill="#d8d2c4"/><path d="M30 66 Q40 78 54 70 Q42 72 30 66z" fill="#c43a3a" stroke="#c43a3a" stroke-width="3"/><path d="M33 68 Q42 72 51 69" fill="none" stroke="#fff" stroke-width="2.2"/><circle cx="33" cy="48" r="2.2" fill="#5a4a50"/><circle cx="55" cy="53" r="2.2" fill="#5a4a50"/></g></svg>
<svg style="left:494.5px;top:169.5px;" width="16" height="16" viewBox="0 0 16 16"><circle cx="8" cy="8" r="7.6" fill="#fff"/><circle cx="8" cy="8" r="6.4" fill="#6bb700"/><path d="M5 8.2l2 2 3.6-3.8" fill="none" stroke="#fff" stroke-width="1.3"/></svg>
<span class="t" style="left:522.70px;top:144.28px;font-size:11.95px;font-weight:400;color:#333;transform:scaleX(0.9123);">Robin Counts</span>
<svg style="left:601.5px;top:143.5px;" width="10" height="10" viewBox="0 0 10 10"><path d="M5 .8l1.2 2.8 3 .3-2.3 2 .7 3L5 7.3 2.4 8.9l.7-3L.8 3.9l3-.3z" fill="none" stroke="#333" stroke-width="0.9"/></svg>
<span class="t" style="left:522.70px;top:159.83px;font-size:8.45px;font-weight:400;color:#666;transform:scaleX(0.8945);">Senior researcher</span>
<span class="t" style="left:522.70px;top:171.03px;font-size:8.45px;font-weight:400;color:#666;transform:scaleX(0.9203);">Research &amp; development</span>
<svg style="left:461.3px;top:201.5px;" width="11.5" height="7.8" viewBox="0 0 11.5 7.8"><rect x=".5" y=".5" width="10.5" height="6.8" rx=".6" fill="none" stroke="#1a78d0" stroke-width="1"/><path d="M.8 1l4.95 3.3L10.7 1" fill="none" stroke="#1a78d0" stroke-width="1"/></svg>
<svg style="left:485px;top:201px;" width="11.5" height="10.5" viewBox="0 0 11.5 10.5"><path d="M.5 .5h10.5v7H3.6L2 9.8V7.5H.5z" fill="none" stroke="#1a78d0" stroke-width="1" stroke-linejoin="round"/></svg>
<svg style="left:509.5px;top:199.5px;" width="10.5" height="10.5" viewBox="0 0 10.5 10.5"><rect width="10.5" height="10.5" rx="1" fill="#0a66c2"/><rect x="2" y="4.2" width="1.5" height="4.5" fill="#fff"/><circle cx="2.75" cy="2.6" r=".9" fill="#fff"/><path d="M4.8 4.2h1.4v.7q.5-.8 1.5-.8q1.7 0 1.7 1.9v2.7H8V6.2q0-.9-.8-.9t-.9 1v2.4H4.8z" fill="#fff"/></svg>
<span class="t" style="left:525.30px;top:201.25px;font-size:9.68px;font-weight:400;color:#333;transform:scaleX(0.9486);">Find profile</span>
<svg style="left:643px;top:203px;" width="12" height="4" viewBox="0 0 12 4"><circle cx="1.5" cy="2" r="0.9" fill="#0078d4"/><circle cx="6" cy="2" r="0.9" fill="#0078d4"/><circle cx="10.5" cy="2" r="0.9" fill="#0078d4"/></svg>
<div style="left:445px;top:224.3px;width:224px;height:0.8px;background:#eeeeee;"></div>
<span class="t" style="left:461.90px;top:241.94px;font-size:9.27px;font-weight:700;color:#333;transform:scaleX(0.9275);">Contact</span>
<svg style="left:501.5px;top:240.5px;" width="7" height="10" viewBox="0 0 7 10"><path d="M1.5 1l4 4-4 4" fill="none" stroke="#444" stroke-width="1"/></svg>
<svg style="left:462.5px;top:264.5px;" width="10" height="7" viewBox="0 0 10 7"><rect x=".5" y=".5" width="9" height="6" fill="none" stroke="#777" stroke-width="0.9"/><path d="M.7 .8l4.3 3 4.3-3" fill="none" stroke="#777" stroke-width="0.9"/></svg>
<span class="t" style="left:480.00px;top:264.48px;font-size:8.55px;font-weight:400;color:#0f6cbd;transform:scaleX(0.9287);">robincounts@contoso.com</span>
<svg style="left:462px;top:281px;" width="11" height="11" viewBox="0 0 11 11"><path d="M2.5 1l2 2.5-1 1.5q1 2.5 3 3.5l1.5-1 2.5 2-1.5 1.5Q4 10 1 2.5z" fill="none" stroke="#777" stroke-width="0.9"/></svg>
<span class="t" style="left:480.00px;top:283.08px;font-size:8.55px;font-weight:400;color:#0f6cbd;transform:scaleX(0.9261);">123-456-7890</span>
<svg style="left:463px;top:299px;" width="9" height="11" viewBox="0 0 9 11"><path d="M4.5 10.5Q1 6 1 4a3.5 3.5 0 0 1 7 0q0 2-3.5 6.5z" fill="none" stroke="#777" stroke-width="0.9"/><circle cx="4.5" cy="4" r="1.2" fill="none" stroke="#777" stroke-width="0.8"/></svg>
<span class="t" style="left:480.00px;top:301.43px;font-size:8.24px;font-weight:400;color:#333;transform:scaleX(0.9121);">San Diego, USA</span>
<div style="left:462px;top:322.8px;width:193px;height:0.8px;background:#eeeeee;"></div>
<span class="t" style="left:462.20px;top:339.14px;font-size:9.27px;font-weight:700;color:#333;transform:scaleX(0.9386);">Reports to</span>
<svg style="left:512px;top:337.7px;" width="7" height="10" viewBox="0 0 7 10"><path d="M1.5 1l4 4-4 4" fill="none" stroke="#444" stroke-width="1"/></svg>
<svg style="left:462px;top:361px;" width="26.5" height="26.5" viewBox="0 0 100 100"><defs><clipPath id="cav"><circle cx="50" cy="50" r="50"/></clipPath></defs><g clip-path="url(#cav)"><rect width="100" height="100" fill="#e6ecee"/><rect x="0" y="20" width="22" height="40" fill="#9aa8ae"/><circle cx="16" cy="34" r="8" fill="#3a4448"/><rect x="72" y="30" width="20" height="34" fill="#6a8a5a"/><circle cx="84" cy="40" r="7" fill="#2c3a30"/><path d="M16 100 Q20 64 48 62 Q76 64 82 100z" fill="#4f8cc4"/><ellipse cx="48" cy="42" rx="13" ry="16" fill="#e0b090"/><path d="M34 36 Q34 20 48 20 Q62 20 62 34 Q54 28 36 38z" fill="#4a3424"/></g></svg>
<svg style="left:480.5px;top:379.5px;" width="10" height="10" viewBox="0 0 10 10"><circle cx="5" cy="5" r="4.9" fill="#fff"/><circle cx="5" cy="5" r="4" fill="#6bb700"/><path d="M3.1 5.1l1.3 1.3 2.4-2.5" fill="none" stroke="#fff" stroke-width="0.9"/></svg>
<span class="t" style="left:496.00px;top:363.95px;font-size:9.68px;font-weight:400;color:#333;transform:scaleX(0.9497);">Callie Underwood</span>
<span class="t" style="left:496.00px;top:377.53px;font-size:8.45px;font-weight:400;color:#666;transform:scaleX(0.9308);">Internal Data Consultant</span>
<div style="left:462px;top:402.4px;width:193px;height:0.8px;background:#eeeeee;"></div>
<svg style="left:462px;top:416px;" width="10.5" height="10.5" viewBox="0 0 10.5 10.5"><rect width="10.5" height="10.5" rx="1" fill="#0a66c2"/><rect x="2" y="4.2" width="1.5" height="4.5" fill="#fff"/><circle cx="2.75" cy="2.6" r=".9" fill="#fff"/><path d="M4.8 4.2h1.4v.7q.5-.8 1.5-.8q1.7 0 1.7 1.9v2.7H8V6.2q0-.9-.8-.9t-.9 1v2.4H4.8z" fill="#fff"/></svg>
<span class="t" style="left:477.40px;top:417.84px;font-size:9.27px;font-weight:700;color:#333;transform:scaleX(0.9437);">LinkedIn profile</span>
<svg style="left:549px;top:416.4px;" width="7" height="10" viewBox="0 0 7 10"><path d="M1.5 1l4 4-4 4" fill="none" stroke="#444" stroke-width="1"/></svg>
<svg style="left:461px;top:440px;" width="27" height="25" viewBox="0 0 27 25"><defs><clipPath id="lm1"><circle cx="12.5" cy="12.5" r="12.3"/></clipPath></defs><g clip-path="url(#lm1)"><rect width="25" height="25" fill="#b8a898"/><rect x="0" y="0" width="8" height="25" fill="#ddd"/><ellipse cx="11" cy="10" rx="4" ry="5" fill="#b27a58"/><path d="M2 25 Q4 16 11 16 Q18 16 20 25z" fill="#c08a30"/><path d="M7 7 Q11 3 15 7z" fill="#333"/></g></svg>
<svg style="left:475.5px;top:439.5px;" width="26" height="26" viewBox="0 0 100 100"><defs><clipPath id="rav3"><circle cx="50" cy="50" r="50"/></clipPath><linearGradient id="rav3g" x1="0" y1="0" x2="1" y2="0.4"><stop offset="0" stop-color="#d08a56"/><stop offset="0.55" stop-color="#a8582e"/><stop offset="1" stop-color="#5e2418"/></linearGradient></defs><g clip-path="url(#rav3)"><rect width="100" height="100" fill="url(#rav3g)"/><rect x="12" y="14" width="5" height="62" fill="#f4dca0"/><path d="M14 100 Q22 80 46 82 Q70 80 86 100z" fill="#ee5220"/><path d="M30 90 Q44 72 60 86 L56 100 L34 100z" fill="#f0c4ae"/><ellipse cx="43" cy="57" rx="25" ry="28" transform="rotate(-15 43 57)" fill="#f2cab6"/><path d="M20 48 Q14 20 42 14 Q72 8 84 30 Q90 50 80 64 Q74 46 62 38 Q46 30 30 42 Q24 46 20 48z" fill="#f3f0e6"/><path d="M62 38 Q76 44 80 64 Q88 48 82 34z" fill="#d8d2c4"/><path d="M30 66 Q40 78 54 70 Q42 72 30 66z" fill="#c43a3a" stroke="#c43a3a" stroke-width="3"/><path d="M33 68 Q42 72 51 69" fill="none" stroke="#fff" stroke-width="2.2"/><circle cx="33" cy="48" r="2.2" fill="#5a4a50"/><circle cx="55" cy="53" r="2.2" fill="#5a4a50"/></g></svg>
<span class="t" style="left:509.30px;top:443.95px;font-size:9.68px;font-weight:400;color:#333;transform:scaleX(0.9314);">Several possible matches for Robin</span>
<span class="t" style="left:509.30px;top:455.85px;font-size:9.68px;font-weight:400;color:#333;transform:scaleX(0.9000);">Counts</span>
</body></html>
